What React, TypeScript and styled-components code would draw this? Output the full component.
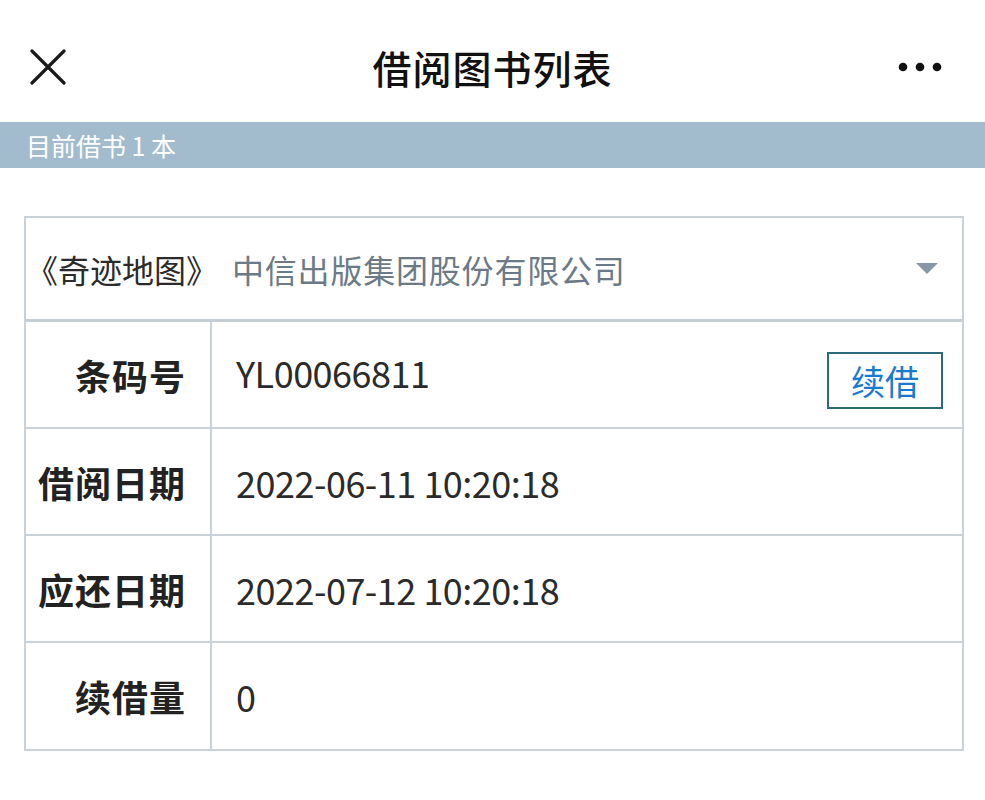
import React from "react";
import styled, { createGlobalStyle } from "styled-components";

const Global = createGlobalStyle`
  html, body { margin: 0; padding: 0; background: #ffffff; }
  body { font-family: "Noto Sans CJK SC", "Noto Sans", sans-serif; }
  * { box-sizing: border-box; }
`;

const Page = styled.div`
  width: 985px;
  height: 800px;
  background: #fff;
  display: flex;
  flex-direction: column;
`;

const Header = styled.header`
  height: 122px;
  display: grid;
  grid-template-columns: 120px 1fr 120px;
  align-items: center;
  padding-top: 12px;
`;

const IconButton = styled.div<{ $align: "start" | "end" }>`
  display: flex;
  justify-content: ${(p) => (p.$align === "start" ? "flex-start" : "flex-end")};
  padding: ${(p) => (p.$align === "start" ? "0 0 0 30px" : "0 43px 0 0")};
  align-items: center;
`;

const Title = styled.h1`
  margin: 0;
  text-align: center;
  font-size: 39px;
  font-weight: 500;
  color: #111;
  letter-spacing: 1px;
`;

const Banner = styled.div`
  height: 46px;
  background: #a3bccd;
  color: #fff;
  font-size: 25px;
  display: flex;
  align-items: center;
  padding-left: 26px;
`;

const Table = styled.div`
  margin: 48px 21px 0 24px;
  border: 2px solid #c9d1d9;
  display: flex;
  flex-direction: column;
`;

const BookRow = styled.div`
  height: 104px;
  display: flex;
  align-items: center;
  padding: 0 24px 0 0;
  border-bottom: 3px solid #c5cdd5;
  font-size: 32px;
`;

const BookName = styled.span`
  color: #2b2b2b;
`;

const Publisher = styled.span`
  color: #6c7a87;
  margin-left: 14px;
  flex: 1;
  letter-spacing: 0.8px;
`;

const Row = styled.div<{ $last?: boolean }>`
  height: ${(p) => (p.$last ? "106px" : "107px")};
  display: grid;
  grid-template-columns: 186px 1fr;
  border-bottom: ${(p) => (p.$last ? "none" : "2px solid #c9d1d9")};
`;

const Label = styled.div`
  border-right: 2px solid #c9d1d9;
  display: flex;
  align-items: center;
  justify-content: flex-end;
  padding-right: 24px;
  font-size: 36px;
  font-weight: 700;
  color: #222;
  letter-spacing: 1px;
`;

const Value = styled.div`
  display: flex;
  align-items: center;
  justify-content: space-between;
  padding: 0 19px 0 24px;
  font-size: 36px;
  color: #2b2b2b;
  letter-spacing: -0.5px;
`;

const Barcode = styled.span`
  margin-top: -6px;
`;

const RenewButton = styled.button`
  width: 116px;
  height: 57px;
  border: 2px solid #2b6a7c;
  background: #fff;
  color: #1a7ad0;
  font-family: inherit;
  font-size: 34px;
  padding: 0;
  display: flex;
  align-items: center;
  justify-content: center;
  margin-top: 12px;
`;

const rows = [
  { label: "借阅日期", value: "2022-06-11 10:20:18" },
  { label: "应还日期", value: "2022-07-12 10:20:18" },
  { label: "续借量", value: "0" },
];

export default function App() {
  return (
    <Page>
      <Global />
      <Header>
        <IconButton $align="start">
          <svg width="36" height="36" viewBox="0 0 36 36">
            <path d="M2 2 L34 34 M34 2 L2 34" stroke="#1a1a1a" strokeWidth="3.2" strokeLinecap="round" />
          </svg>
        </IconButton>
        <Title>借阅图书列表</Title>
        <IconButton $align="end">
          <svg width="44" height="10" viewBox="0 0 44 10">
            <circle cx="5" cy="5" r="4.3" fill="#111" />
            <circle cx="22" cy="5" r="4.3" fill="#111" />
            <circle cx="39" cy="5" r="4.3" fill="#111" />
          </svg>
        </IconButton>
      </Header>
      <Banner>目前借书 1 本</Banner>
      <Table>
        <BookRow>
          <BookName>《奇迹地图》</BookName>
          <Publisher>中信出版集团股份有限公司</Publisher>
          <svg width="22" height="12" viewBox="0 0 22 12">
            <path d="M0 0 H22 L11 11 Z" fill="#8797a5" />
          </svg>
        </BookRow>
        <Row>
          <Label>条码号</Label>
          <Value>
            <Barcode>YL00066811</Barcode>
            <RenewButton>续借</RenewButton>
          </Value>
        </Row>
        {rows.map((r, i) => (
          <Row key={r.label} $last={i === rows.length - 1}>
            <Label>{r.label}</Label>
            <Value>{r.value}</Value>
          </Row>
        ))}
      </Table>
    </Page>
  );
}
